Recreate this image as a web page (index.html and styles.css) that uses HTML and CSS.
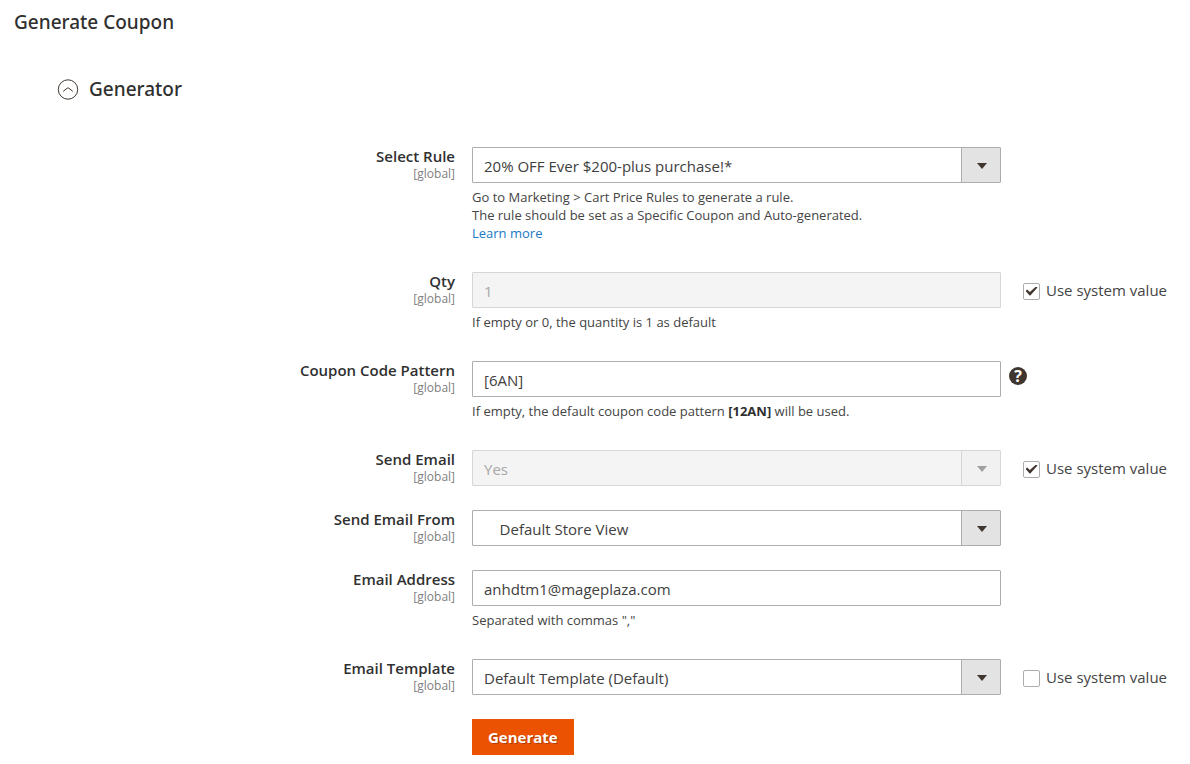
FILE: index.html
```
<!DOCTYPE html>
<html lang="en">
<head>
  <meta charset="UTF-8" />
  <meta name="viewport" content="width=device-width, initial-scale=1.0" />
  <title>Generate Coupon</title>
  <link rel="stylesheet" href="styles.css">
</head>
<body>
  <h1>Generate Coupon</h1>

  <h2>
    <button type="button" class="section-toggle" aria-expanded="true">
      <svg width="22" height="22" viewBox="0 0 22 22" fill="none" stroke="#41362f" aria-hidden="true">
        <circle cx="11" cy="11.5" r="9.7" stroke-width="1" />
        <path d="M6.2 13.4 L10.2 10.2 Q11 9.6 11.8 10.2 L15.8 13.4" stroke-width="1" />
      </svg>
      Generator
    </button>
  </h2>

  <form class="coupon-form">
    <div class="row">
      <label class="field-label" for="rule">Select Rule <span>[global]</span></label>
      <div class="field">
        <div class="select">
          <select id="rule">
            <option>20% OFF Ever $200-plus purchase!*</option>
          </select>
        </div>
        <p class="note">Go to Marketing &gt; Cart Price Rules to generate a rule.<br>
          The rule should be set as a Specific Coupon and Auto-generated.<br>
          <a href="#">Learn more</a></p>
      </div>
    </div>

    <div class="row">
      <label class="field-label" for="qty">Qty <span>[global]</span></label>
      <div class="field">
        <input type="text" id="qty" value="1" disabled>
        <p class="note">If empty or 0, the quantity is 1 as default</p>
      </div>
      <label class="use-system"><input type="checkbox" checked> Use system value</label>
    </div>

    <div class="row">
      <label class="field-label" for="pattern">Coupon Code Pattern <span>[global]</span></label>
      <div class="field">
        <input type="text" id="pattern" value="[6AN]">
        <p class="note">If empty, the default coupon code pattern <strong>[12AN]</strong> will be used.</p>
      </div>
      <button type="button" class="help" aria-label="Help">?</button>
    </div>

    <div class="row">
      <label class="field-label" for="send">Send Email <span>[global]</span></label>
      <div class="field">
        <div class="select">
          <select id="send" disabled>
            <option>Yes</option>
          </select>
        </div>
      </div>
      <label class="use-system"><input type="checkbox" checked> Use system value</label>
    </div>

    <div class="row">
      <label class="field-label" for="from">Send Email From <span>[global]</span></label>
      <div class="field">
        <div class="select">
          <select id="from">
            <option>&nbsp;&nbsp;&nbsp;&nbsp;Default Store View</option>
          </select>
        </div>
      </div>
    </div>

    <div class="row">
      <label class="field-label" for="email">Email Address <span>[global]</span></label>
      <div class="field">
        <input type="text" id="email" value="anhdtm1@mageplaza.com">
        <p class="note">Separated with commas ","</p>
      </div>
    </div>

    <div class="row">
      <label class="field-label" for="template">Email Template <span>[global]</span></label>
      <div class="field">
        <div class="select">
          <select id="template">
            <option>Default Template (Default)</option>
          </select>
        </div>
      </div>
      <label class="use-system"><input type="checkbox"> Use system value</label>
    </div>

    <div class="row">
      <div class="actions">
        <button type="button" class="generate">Generate</button>
      </div>
    </div>
  </form>
</body>
</html>
```

FILE: styles.css
```
* {
  box-sizing: border-box;
}

body {
  margin: 0;
  background: #fff;
  color: #444;
  font-family: "Open Sans", "Noto Sans", sans-serif;
  font-size: 15px;
}

h1 {
  margin: 0;
  padding: 8px 14px 0;
  font-family: "Noto Sans", "Open Sans", sans-serif;
  font-size: 19px;
  line-height: 28px;
  font-weight: 500;
  color: #303030;
}

h2 {
  margin: 39px 0 0 57px;
}

.section-toggle {
  display: flex;
  align-items: center;
  gap: 10px;
  padding: 0;
  border: none;
  background: none;
  color: #303030;
  font-family: "Noto Sans", "Open Sans", sans-serif;
  font-size: 19px;
  line-height: 28px;
  font-weight: 500;
}

.coupon-form {
  display: flex;
  flex-direction: column;
  gap: 24px;
  padding: 44px 0 8px;
}

.row {
  display: grid;
  grid-template-columns: 472fr 529fr 189fr;
  align-items: start;
}

.field-label {
  padding-right: 17px;
  text-align: right;
  font-weight: 600;
  line-height: 18px;
  color: #303030;
}

.field-label span {
  display: block;
  font-size: 12px;
  font-weight: 400;
  color: #808080;
}

input[type="text"],
select {
  display: block;
  width: 100%;
  height: 36px;
  padding: 2px 11px 0;
  border: 1px solid #adadad;
  border-radius: 1px;
  background: #fff;
  color: #404040;
  font-family: inherit;
  font-size: 15px;
}

select {
  appearance: none;
  padding-right: 48px;
}

.select {
  position: relative;
}

/* arrow box on the right of the drop-down */
.select::before {
  content: "";
  position: absolute;
  top: 1px;
  right: 1px;
  bottom: 1px;
  width: 38px;
  border-left: 1px solid #adadad;
  background: #e3e3e3;
  pointer-events: none;
}

.select::after {
  content: "";
  position: absolute;
  top: 16px;
  right: 14px;
  border: 5px solid transparent;
  border-top: 6px solid #41362f;
  border-bottom: 0;
  pointer-events: none;
}

input[type="text"]:disabled,
select:disabled {
  background: #f4f4f4;
  border-color: #d6d6d6;
  color: #a8a8a8;
  opacity: 1;
}

.select:has(select:disabled)::before {
  background: #f1f1f1;
  border-color: #d6d6d6;
}

.select:has(select:disabled)::after {
  border-top-color: #a0a0a0;
}

.note {
  margin: 5px 0 0;
  padding-bottom: 6px;
  font-size: 13px;
  line-height: 18px;
  color: #444;
}

.note strong {
  color: #303030;
}

.note a {
  color: #1979c3;
  text-decoration: none;
}

.use-system {
  display: flex;
  align-items: center;
  gap: 6px;
  height: 36px;
  padding-left: 22px;
  white-space: nowrap;
}

.use-system input {
  appearance: none;
  display: grid;
  place-items: center;
  width: 17px;
  height: 17px;
  margin: 2px 0 0;
  border: 1px solid #adadad;
  border-radius: 2px;
  background: #fff;
}

.use-system input:checked::before {
  content: "";
  width: 12px;
  height: 9px;
  background: #41362f;
  clip-path: polygon(0 48%, 14% 34%, 36% 60%, 88% 0, 100% 12%, 40% 100%, 34% 100%);
}

.help {
  width: 18px;
  height: 18px;
  margin: 6px 0 0 8px;
  padding: 0;
  border: none;
  border-radius: 50%;
  background: #41362f;
  color: #fff;
  font-family: inherit;
  font-size: 16px;
  line-height: 18px;
  font-weight: 700;
}

.actions {
  grid-column: 2;
}

.generate {
  height: 36px;
  padding: 0 16px;
  border: none;
  background: #eb5202;
  color: #fff;
  font-family: inherit;
  font-size: 15px;
  font-weight: 700;
  text-shadow: 1px 1px 0 rgba(0, 0, 0, 0.25);
}
```
